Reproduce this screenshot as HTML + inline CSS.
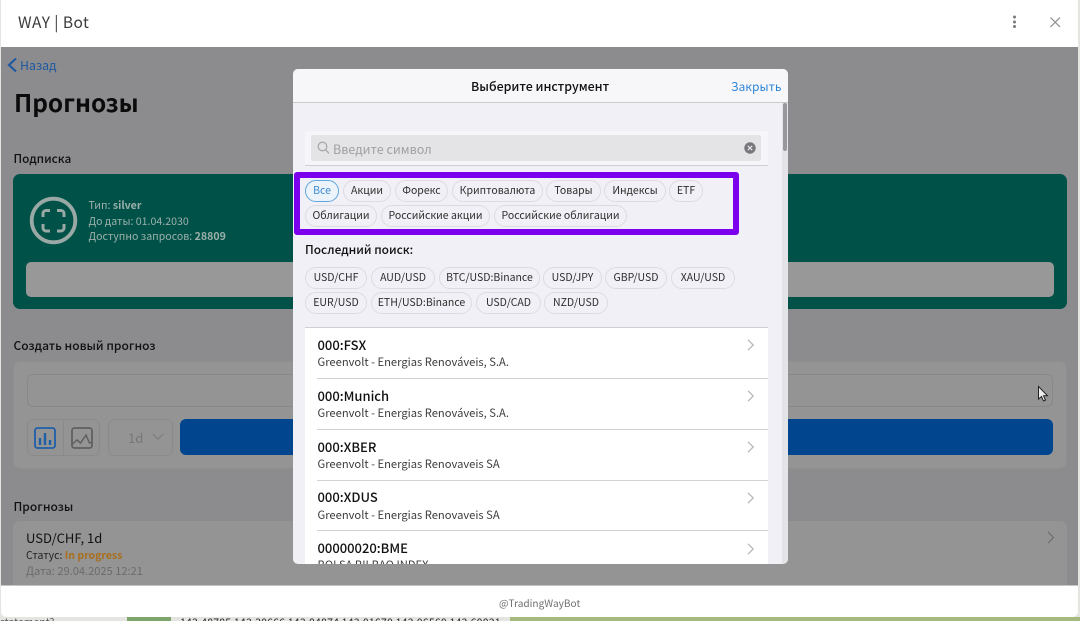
<!DOCTYPE html>
<html lang="ru"><head><meta charset="utf-8"><title>WAY | Bot</title>
<style>
*{box-sizing:border-box}
html,body{margin:0;padding:0;width:1080px;height:621px;overflow:hidden}
body{position:relative;background:#e4e4e0;font-family:"Noto Sans CJK SC","Liberation Sans",sans-serif;color:#000}
.a{position:absolute}
.t{position:absolute;white-space:nowrap;line-height:1}
.chip{position:absolute;height:22px;border:1px solid #dcdce0;border-radius:11px;background:#f0f0f6;color:#2e2e2e;font-size:10.500px;line-height:20px;text-align:center;white-space:nowrap}
.title{font-size:13px;color:#111;font-weight:500}
.sub{font-size:11.200px;color:#3c3c3c}
svg{position:absolute;overflow:visible}
</style></head><body>
<div class="a" style="left:127px;top:617px;width:44px;height:4px;background:#7fa56f"></div>
<div class="a" style="left:510px;top:617px;width:570px;height:4px;background:#a5b97f"></div>
<div class="a" style="left:0;top:617px;width:540px;height:4px;overflow:hidden"><div class="t" style="left:180px;top:.5px;font-size:10.500px;color:#222;letter-spacing:.2px">143.48785 143.30666 143.04874 143.01670 143.06560 143.60031</div><div class="t" style="left:0;top:.5px;font-size:10.500px;color:#555">statement?</div></div>

<div class="a" style="left:1px;top:0;width:1077px;height:617px;background:#fff;border-radius:0 0 6px 6px;overflow:hidden">
  <div class="a" style="left:0;top:47px;width:1077px;height:538px;background:#8c8b8e"></div>
</div>

<div class="t" style="left:18px;top:15px;font-size:15.500px;color:#3a3a3a;letter-spacing:.45px">WAY | Bot</div>
<svg style="left:1010px;top:15px" width="10" height="15"><circle cx="4.500" cy="2" r="1.500" fill="#7b7b7b"/><circle cx="4.500" cy="7" r="1.500" fill="#7b7b7b"/><circle cx="4.500" cy="11.500" r="1.500" fill="#7b7b7b"/></svg>
<svg style="left:1050px;top:17px" width="11" height="11"><path d="M.5.5 10 10M10 .5.5 10" stroke="#8a8a8a" stroke-width="1.200" fill="none"/></svg>

<svg style="left:7px;top:57px" width="11" height="16"><path d="M9 1.500 2 8l7 6.500" stroke="#1f5aa0" stroke-width="2.200" fill="none"/></svg>
<div class="t" style="left:20px;top:58.800px;font-size:12.300px;color:#1f5aa0">Назад</div>
<div class="t" style="left:14px;top:91.300px;font-size:24.400px;font-weight:700;color:#0b0b0b">Прогнозы</div>
<div class="t" style="left:13.500px;top:153px;font-size:11.800px;color:#111;font-weight:500">Подписка</div>

<div class="a" style="left:13px;top:174px;width:1054px;height:135px;background:#005248;border-radius:7px"></div>
<svg style="left:29px;top:196px" width="50" height="50" fill="none" stroke="#9aa9a5"><circle cx="24.500" cy="24.500" r="21.800" stroke-width="3.800"/><path d="M14 21v-3.500a3 3 0 0 1 3-3H21M28 14.500h4a3 3 0 0 1 3 3V21M35 28v4a3 3 0 0 1-3 3H28M21 35h-4a3 3 0 0 1-3-3V28" stroke-width="3"/></svg>
<div class="t" style="left:88.500px;top:200.600px;font-size:10.600px;color:#9bb0ab">Тип: <b>silver</b></div>
<div class="t" style="left:88.500px;top:216.600px;font-size:10.600px;color:#9bb0ab">До даты: 01.04.2030</div>
<div class="t" style="left:88.500px;top:231.600px;font-size:10.600px;color:#9bb0ab">Доступно запросов: <b>28809</b></div>
<div class="a" style="left:26px;top:262px;width:1028px;height:35px;background:#989898;border-radius:5px"></div>

<div class="t" style="left:13.500px;top:340px;font-size:12px;color:#111;font-weight:500">Создать новый прогноз</div>
<div class="a" style="left:13px;top:361px;width:1054px;height:108px;background:#949494;border:1px solid #8f8f8f;border-radius:7px"></div>
<div class="a" style="left:27px;top:374px;width:1026px;height:33px;background:#949494;border:1px solid #888;border-radius:6px"></div>
<div class="a" style="left:27px;top:419px;width:73px;height:37px;border:1px solid #8a8a8a;border-radius:7px"></div>
<div class="a" style="left:63px;top:420px;width:1px;height:35px;background:#8a8a8a"></div>
<svg style="left:34px;top:427px" width="23" height="23" fill="none"><rect x="1" y="1" width="20" height="20" rx="2.500" stroke="#1e5fa8" stroke-width="1.800"/><path d="M6 11v7M11 6v12M16 13v5" stroke="#1e5fa8" stroke-width="2.400"/></svg>
<svg style="left:71px;top:427px" width="23" height="23" fill="none"><rect x="1" y="1" width="20" height="20" rx="2.500" stroke="#606060" stroke-width="1.800"/><path d="M1.500 17 6 13l3.500 3L15 8l3.500 8 3-1" stroke="#606060" stroke-width="1.500"/></svg>
<div class="a" style="left:108px;top:419px;width:65px;height:37px;border:1px solid #8a8a8a;border-radius:7px"></div>
<div class="t" style="left:128px;top:430.500px;font-size:13px;color:#777">1d</div>
<svg style="left:152px;top:433px" width="12" height="8"><path d="M1 1l5 5 5-5" stroke="#7d7d7d" stroke-width="1.200" fill="none"/></svg>
<div class="a" style="left:180px;top:419px;width:873px;height:36px;background:#00458e;border-radius:6px"></div>

<div class="t" style="left:13.500px;top:501px;font-size:12px;color:#111;font-weight:500">Прогнозы</div>
<div class="a" style="left:13px;top:521px;width:1054px;height:64px;background:#949494;border-radius:7px 7px 0 0"></div>
<div class="t" style="left:26px;top:530.700px;font-size:13px;color:#111">USD/CHF, 1d</div>
<div class="t" style="left:26px;top:550.600px;font-size:10.500px;color:#222">Статус: <b style="color:#a86e1c">In progress</b></div>
<div class="t" style="left:26px;top:566.300px;font-size:11.100px;color:#6b6b6b">Дата: 29.04.2025 12:21</div>
<svg style="left:1047px;top:531px" width="8" height="13"><path d="M1 1l5.500 5.500L1 12" stroke="#707070" stroke-width="1.300" fill="none"/></svg>
<svg style="left:1038px;top:386px" width="11" height="16"><path d="M.5.500v12.500l3-2.500 2 4.500 2-1-2-4.200h4z" fill="#eee" stroke="#222" stroke-width="1"/></svg>

<div class="a" style="left:1px;top:585px;width:1077px;height:32px;background:#fff;border-top:1px solid #c4c4c4;border-radius:0 0 6px 6px"></div>
<div class="t" style="left:499px;top:598.200px;font-size:10.100px;color:#6f6f6f">@TradingWayBot</div>

<!-- modal -->
<div class="a" style="left:293px;top:69px;width:495px;height:495px;background:#f0f0f6;border-radius:5px;overflow:hidden">
  <div class="a" style="left:0;top:0;width:495px;height:34px;background:#f7f7fa;border-bottom:1px solid #c9c9cc"></div>
  <div class="t" style="left:178px;top:11px;font-size:12.400px;color:#111;font-weight:500">Выберите инструмент</div>
  <div class="t" style="left:438px;top:11.500px;font-size:12.100px;color:#2f86d8">Закрыть</div>
  <div class="a" style="left:12px;top:62px;width:463px;height:35px;background:#f6f6fa;border-bottom:1px solid #cfcfd3"></div>
  <div class="a" style="left:18px;top:66px;width:450px;height:26px;background:#e4e4e6;border-radius:2px"></div>
  <svg style="left:24px;top:72px" width="13" height="14" fill="none" stroke="#a8a8ac" stroke-width="1.300"><circle cx="5.500" cy="5.500" r="4.300"/><path d="M8.800 8.800 12 12.500"/></svg>
  <div class="t" style="left:40px;top:74px;font-size:12.500px;color:#a0a0a4">Введите символ</div>
  <svg style="left:451px;top:73px" width="12" height="12"><circle cx="6" cy="6" r="5.700" fill="#77777b"/><path d="M3.800 3.800l4.400 4.400M8.200 3.800 3.800 8.200" stroke="#e4e4e6" stroke-width="1.300"/></svg>

  <div class="a" style="left:1px;top:102.500px;width:445px;height:63px;border:6px solid #7a00ee;border-radius:3px"></div>

  <div class="t" style="left:12px;top:174.500px;font-size:11.900px;color:#111;font-weight:500">Последний поиск:</div>

  <div class="a" style="left:12px;top:258px;width:463px;height:237px;background:#fff;border-top:1px solid #cfcfd3"></div>
  <div class="a" style="left:24px;top:309px;width:451px;height:1px;background:#d3d3d6"></div>
  <div class="a" style="left:24px;top:360px;width:451px;height:1px;background:#d3d3d6"></div>
  <div class="a" style="left:24px;top:410.500px;width:451px;height:1px;background:#d3d3d6"></div>
  <div class="a" style="left:24px;top:461px;width:451px;height:1px;background:#d3d3d6"></div>

  <div class="a" style="left:489px;top:34px;width:6px;height:461px;background:#e3e3e8"></div>
  <div class="a" style="left:490px;top:34px;width:4px;height:48px;background:#98989c;border-radius:2px"></div>
</div>

<!-- category chips -->
<div class="chip" style="left:305px;top:180px;width:34px;color:#3a8ad0;border-color:#60a6de;background:#edf3fa">Все</div>
<div class="chip" style="left:343px;top:180px;width:48px">Акции</div>
<div class="chip" style="left:395px;top:180px;width:53px">Форекс</div>
<div class="chip" style="left:452px;top:180px;width:91px">Криптовалюта</div>
<div class="chip" style="left:546px;top:180px;width:55px">Товары</div>
<div class="chip" style="left:604px;top:180px;width:62px">Индексы</div>
<div class="chip" style="left:669px;top:180px;width:34px">ETF</div>
<div class="chip" style="left:305px;top:205px;width:72px">Облигации</div>
<div class="chip" style="left:381px;top:205px;width:109px">Российские акции</div>
<div class="chip" style="left:494px;top:205px;width:133px">Российские облигации</div>

<!-- recent chips -->
<div class="chip" style="left:305px;top:267px;width:62px">USD/CHF</div>
<div class="chip" style="left:371px;top:267px;width:64px">AUD/USD</div>
<div class="chip" style="left:439px;top:267px;width:101px">BTC/USD:Binance</div>
<div class="chip" style="left:543px;top:267px;width:59px">USD/JPY</div>
<div class="chip" style="left:605px;top:267px;width:62px">GBP/USD</div>
<div class="chip" style="left:671px;top:267px;width:64px">XAU/USD</div>
<div class="chip" style="left:305px;top:292px;width:62px">EUR/USD</div>
<div class="chip" style="left:371px;top:292px;width:101px">ETH/USD:Binance</div>
<div class="chip" style="left:476px;top:292px;width:65px">USD/CAD</div>
<div class="chip" style="left:544px;top:292px;width:64px">NZD/USD</div>

<!-- list text -->
<div class="t title" style="left:317.500px;top:337.700px">000:FSX</div>
<div class="t sub" style="left:317.500px;top:356.800px">Greenvolt - Energias Renováveis, S.A.</div>
<div class="t title" style="left:317.500px;top:388.700px">000:Munich</div>
<div class="t sub" style="left:317.500px;top:407.800px">Greenvolt - Energias Renováveis, S.A.</div>
<div class="t title" style="left:317.500px;top:439.700px">000:XBER</div>
<div class="t sub" style="left:317.500px;top:458.800px">Greenvolt - Energias Renovaveis SA</div>
<div class="t title" style="left:317.500px;top:490.200px">000:XDUS</div>
<div class="t sub" style="left:317.500px;top:509.800px">Greenvolt - Energias Renovaveis SA</div>
<div class="t title" style="left:317.500px;top:540.700px">00000020:BME</div>
<div class="a" style="left:317px;top:559px;width:200px;height:5px;overflow:hidden"><div class="t sub" style="left:.5px;top:.8px">BOLSA BILBAO INDEX</div></div>

<svg style="left:747px;top:339px" width="8" height="12"><path d="M1 .8 6.200 6 1 11.200" stroke="#b9b9bd" stroke-width="1.300" fill="none"/></svg>
<svg style="left:747px;top:390px" width="8" height="12"><path d="M1 .8 6.200 6 1 11.200" stroke="#b9b9bd" stroke-width="1.300" fill="none"/></svg>
<svg style="left:747px;top:441px" width="8" height="12"><path d="M1 .8 6.200 6 1 11.200" stroke="#b9b9bd" stroke-width="1.300" fill="none"/></svg>
<svg style="left:747px;top:492px" width="8" height="12"><path d="M1 .8 6.200 6 1 11.200" stroke="#b9b9bd" stroke-width="1.300" fill="none"/></svg>
<svg style="left:747px;top:543px" width="8" height="12"><path d="M1 .8 6.200 6 1 11.200" stroke="#b9b9bd" stroke-width="1.300" fill="none"/></svg>
</body></html>
